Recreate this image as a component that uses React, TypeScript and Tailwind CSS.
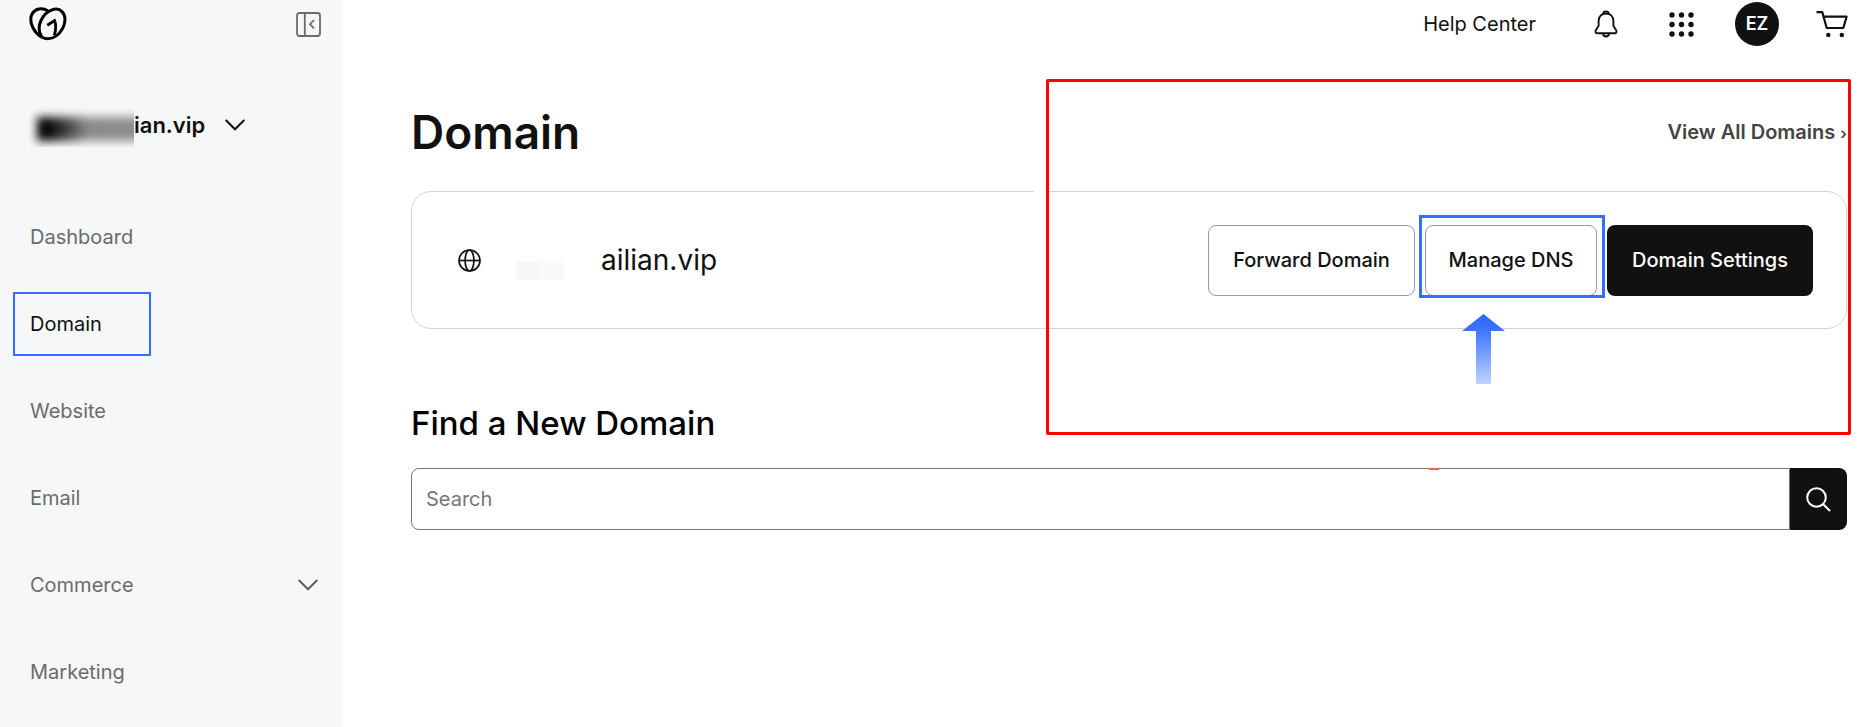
import React from "react";

type NavItem = {
  label: string;
  active?: boolean;
  expandable?: boolean;
};

const navItems: NavItem[] = [
  { label: "Dashboard" },
  { label: "Domain", active: true },
  { label: "Website" },
  { label: "Email" },
  { label: "Commerce", expandable: true },
  { label: "Marketing" },
];

function Logo() {
  return (
    <svg width="38" height="34" viewBox="0 0 38 34" fill="none" stroke="#000" strokeWidth="3" strokeLinejoin="round">
      <path d="M19 4C14.500 1 8.500 1 4.800 4.600C.800 8.600 1 15.500 4 21C6 24.800 9 28 12.500 30" />
      <path d="M12.600 29.500C9.800 25 9.500 18.500 12.200 13C14.500 8.300 18.500 4.600 23 2.900C26.500 1.600 30.500 2 33 4.600C36.900 8.600 36.800 15.500 33.700 21.200C30.300 27.600 24.500 31.800 19 31.800C16.700 31.800 14.500 31.100 12.500 30" />
      <path d="M18.300 18.300L25.600 13.600C27.200 18 27 23 25.300 28.500" strokeWidth="2.800" strokeLinejoin="miter" />
    </svg>
  );
}

function CollapseIcon() {
  return (
    <svg width="25" height="25" viewBox="0 0 25 25" fill="none" stroke="#6b6b6b" strokeWidth="1.8">
      <rect x="1" y="1" width="23" height="23" rx="2.500" />
      <path d="M8.800 1v23" />
      <path d="M18 8L14 12.200L18 16.400" />
    </svg>
  );
}

function Chevron({ color }: { color: string }) {
  return (
    <svg width="20" height="12" viewBox="0 0 20 12" fill="none" stroke={color} strokeWidth="2" strokeLinecap="round">
      <path d="M1.200 1.500L10 10.300L18.800 1.500" />
    </svg>
  );
}

function BellIcon() {
  return (
    <svg width="24" height="28" viewBox="0 0 24 28" fill="none" stroke="#111" strokeWidth="1.900" strokeLinejoin="round">
      <path d="M12 3.500C7.500 3.500 4.600 6.700 4.600 11V15.800L2 20C1 21.500 1.600 23.200 2.800 23.200H21.200C22.400 23.200 23 21.500 22 20L19.400 15.800V11C19.400 6.700 16.500 3.500 12 3.500Z" />
      <path d="M9.300 3.800C9.300 .500 14.700 .500 14.700 3.800" />
      <path d="M9 23.600C9.500 27.500 14.500 27.500 15 23.600" />
    </svg>
  );
}

function GridIcon() {
  const stops = [3, 12.5, 22];
  return (
    <svg width="25" height="25" viewBox="0 0 25 25" fill="#111">
      {stops.map((y) => stops.map((x) => <circle key={`${x}-${y}`} cx={x} cy={y} r="2.700" />))}
    </svg>
  );
}

function CartIcon() {
  return (
    <svg width="32" height="28" viewBox="0 0 32 28" fill="none" stroke="#111" strokeWidth="2.200">
      <path d="M.500 2.200H6.300L10.700 18H27.300L30.600 6.700H7.600" strokeLinejoin="round" />
      <circle cx="12.300" cy="25" r="2.200" fill="#111" stroke="none" />
      <circle cx="25.800" cy="25" r="2.200" fill="#111" stroke="none" />
    </svg>
  );
}

function GlobeIcon() {
  return (
    <svg width="23" height="23" viewBox="0 0 23 23" fill="none" stroke="#111" strokeWidth="1.700">
      <circle cx="11.500" cy="11.500" r="10.500" />
      <ellipse cx="11.500" cy="11.500" rx="4.400" ry="10.500" />
      <path d="M1 11.500h21" />
    </svg>
  );
}

function SearchIcon() {
  return (
    <svg width="25" height="25" viewBox="0 0 25 25" fill="none" stroke="#fff" strokeWidth="2">
      <circle cx="10.500" cy="10.500" r="9.300" />
      <path d="M17.200 17.200L24 24" />
    </svg>
  );
}

function ArrowUp() {
  return (
    <svg width="43" height="70" viewBox="0 0 43 70">
      <defs>
        <linearGradient id="arrow" x1="0" y1="0" x2="0" y2="1">
          <stop offset="0" stopColor="#2a66ff" />
          <stop offset="0.200" stopColor="#3a72ff" />
          <stop offset="1" stopColor="#c0d3ff" />
        </linearGradient>
      </defs>
      <path d="M21.500 0L43 17H29V70H14V17H0Z" fill="url(#arrow)" />
    </svg>
  );
}

function Sidebar() {
  return (
    <aside className="w-[343px] shrink-0 bg-[#f5f7f9]">
      <div className="flex h-12 items-center justify-between pl-[29px] pr-[22px]">
        <a href="#" aria-label="Home">
          <Logo />
        </a>
        <button type="button" aria-label="Collapse menu">
          <CollapseIcon />
        </button>
      </div>

      <button type="button" className="mt-[55px] flex h-11 w-full items-center pl-[29px] text-[22px] font-semibold text-[#111]">
        <span className="h-11 w-[105px] overflow-hidden py-2.5">
          <span className="ml-2 mt-1 block h-6 w-[110px] bg-linear-to-r from-black via-[#8a8a8a] via-45% to-[#8f8f8f] blur-[5px]" />
        </span>
        <span>ian.vip</span>
        <span className="ml-5">
          <Chevron color="#111" />
        </span>
      </button>

      <nav className="mt-[46px]">
        <ul>
          {navItems.map((item) => (
            <li key={item.label} className="flex h-[87px] items-center justify-between pl-[13px] pr-[25px]">
              <a
                href="#"
                className={`flex h-16 w-[138px] items-center border-2 px-[15px] text-xl ${
                  item.active ? "border-[#3370ff] text-[#111]" : "border-transparent text-[#6b6b6b]"
                }`}
              >
                {item.label}
              </a>
              {item.expandable && <Chevron color="#5f5f5f" />}
            </li>
          ))}
        </ul>
      </nav>
    </aside>
  );
}

function TopBar() {
  return (
    <header className="flex h-12 items-center justify-end pr-[15px] text-[#111]">
      <a href="#" className="text-xl">Help Center</a>
      <button type="button" aria-label="Notifications" className="ml-[58px]">
        <BellIcon />
      </button>
      <button type="button" aria-label="Apps" className="ml-[51px]">
        <GridIcon />
      </button>
      <button type="button" className="ml-[41px] h-11 w-11 rounded-full bg-[#111] text-lg font-semibold text-white">
        EZ
      </button>
      <button type="button" aria-label="Cart" className="ml-[37px]">
        <CartIcon />
      </button>
    </header>
  );
}

function DomainCard() {
  return (
    <section className="relative mt-[23px] flex h-[138px] items-center justify-between rounded-[20px] border border-[#d4d4d4] pl-[46px] pr-[33px]">
      {/* break in the top border, left of the highlighted area */}
      <span className="absolute -top-px right-[800px] h-px w-3 bg-white" />

      <div className="flex items-center">
        <GlobeIcon />
        <span className="ml-[35px] mt-5 h-[19px] w-6 bg-[#f7f7f7]" />
        <span className="mt-5 h-[19px] w-6 bg-[#fafafa]" />
        <span className="ml-[37px] text-[28px] text-[#111]">ailian.vip</span>
      </div>

      <div className="flex items-center gap-2.5 text-xl font-medium text-[#111]">
        <button type="button" className="h-[71px] w-[207px] rounded-lg border border-[#8f9bb3]">
          Forward Domain
        </button>
        <div className="relative">
          <button type="button" className="h-[71px] w-[172px] rounded-lg border border-[#8f9bb3]">
            Manage DNS
          </button>
          <span className="pointer-events-none absolute -left-1.5 -right-2 -top-2.5 -bottom-0.5 border-3 border-[#3370ff]" />
          <span className="pointer-events-none absolute left-[37px] top-[89px]">
            <ArrowUp />
          </span>
        </div>
        <button type="button" className="h-[71px] w-[206px] rounded-lg bg-[#111] text-white">
          Domain Settings
        </button>
      </div>
    </section>
  );
}

function DomainSearch() {
  return (
    <section className="mt-[70px]">
      <h2 className="text-[33px] leading-12 font-medium text-black">Find a New Domain</h2>
      <form className="relative mt-[21px] flex h-[62px]" onSubmit={(e) => e.preventDefault()}>
        <input
          type="text"
          aria-label="Search"
          placeholder="Search"
          className="min-w-0 flex-1 rounded-l-lg border border-[#767676] px-3.5 text-xl outline-none placeholder:text-[#767676]"
        />
        <button type="submit" aria-label="Search" className="flex w-[57px] items-center justify-center rounded-r-lg bg-[#111]">
          <SearchIcon />
        </button>
        <span className="absolute top-0 right-[408px] h-0.5 w-2.5 bg-[#ff5a4a]" />
      </form>
    </section>
  );
}

export default function App() {
  return (
    <div className="flex min-h-screen bg-white font-['Inter',sans-serif]">
      <Sidebar />
      <main className="relative min-w-0 flex-1">
        <TopBar />
        <div className="pl-[68px] pr-4">
          <div className="mt-12 flex h-[72px] items-center justify-between">
            <h1 className="text-[46px] leading-[64px] font-semibold text-[#111]">Domain</h1>
            <a href="#" className="text-xl font-semibold text-[#444]">
              View All Domains <span className="text-base">›</span>
            </a>
          </div>
          <DomainCard />
          <DomainSearch />
        </div>
        <div className="pointer-events-none absolute top-[79px] right-3 h-[356px] w-[805px] rounded-xs border-3 border-[#ff0000]" />
      </main>
    </div>
  );
}
